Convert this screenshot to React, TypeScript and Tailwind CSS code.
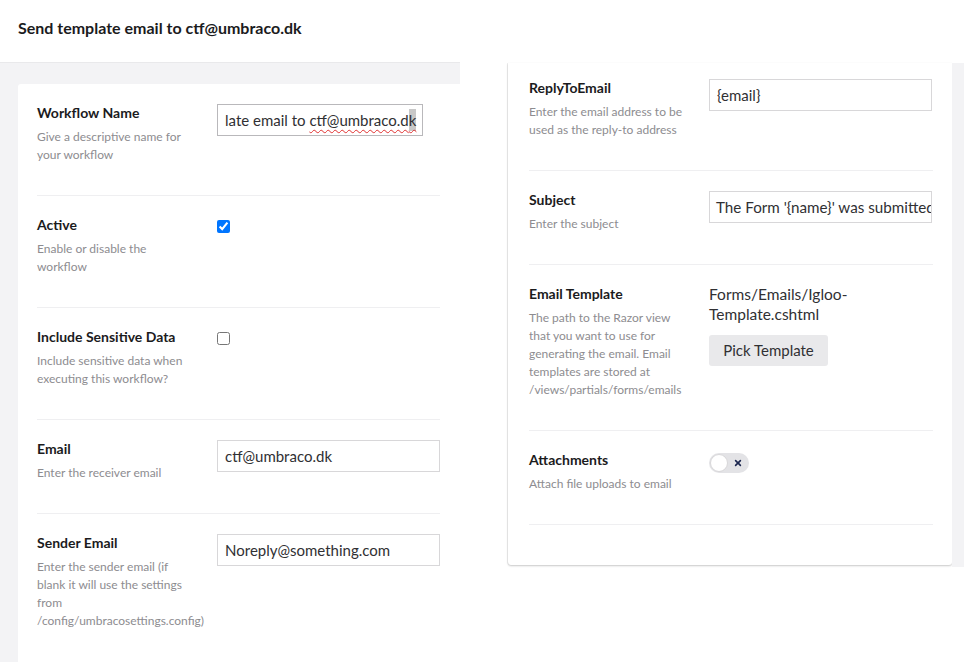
import React from 'react';

type RowProps = {
  label: string;
  description: React.ReactNode;
  children?: React.ReactNode;
  first?: boolean;
  last?: boolean;
};

function Row({ label, description, children, first, last }: RowProps) {
  return (
    <div
      className={`flex pb-[31px] ${last ? '' : 'border-b border-[#efeff1]'} ${first ? 'pt-[15px]' : 'pt-[19px]'}`}
    >
      <div className="w-[180px] shrink-0">
        <div className="text-[14px] font-bold leading-5 text-[#1b1b1d]">{label}</div>
        <div className="mt-[5px] w-[156px] text-[12px] leading-[18px] text-[#8d8c90]">
          {description}
        </div>
      </div>
      <div className="w-[223px] shrink-0">{children}</div>
    </div>
  );
}

function TextInput({ value }: { value: string }) {
  return (
    <div className="mt-px flex h-[32px] w-[223px] items-center overflow-hidden whitespace-nowrap border border-[#d8d7d9] bg-white px-[7px] text-[15px] text-[#303033]">
      {value}
    </div>
  );
}

export default function App() {
  return (
    <div className="flex h-[662px] w-[964px] overflow-hidden bg-white font-['Lato','Open_Sans',sans-serif]">
      {/* Left screenshot */}
      <div className="flex w-[460px] shrink-0 flex-col overflow-hidden">
        <div className="h-[63px] shrink-0 border-b border-[#e9e9eb] bg-white pl-[18px] pt-[18px]">
          <h1 className="text-[16px] font-bold leading-5 text-[#1b1b1d]">
            Send template email to ctf@umbraco.dk
          </h1>
        </div>
        <div className="flex-1 bg-[#f3f3f5] pl-[18px] pt-[21px]">
          <div className="h-full w-[442px] rounded-tl-[3px] bg-white pl-[19px] pr-[20px]">
            <Row label="Workflow Name" description="Give a descriptive name for your workflow">
              <div className="mt-px flex h-[32px] w-[206px] items-center overflow-hidden whitespace-nowrap border border-[#b9b8bb] bg-white pl-[7px] text-[15px] text-[#303033]">
                <span>late email to&nbsp;</span>
                <span className="underline decoration-[#e03030] decoration-wavy decoration-1 underline-offset-[3px]">
                  ctf@umbraco.d
                </span>
                <span className="bg-[#c8c8c8] underline decoration-[#e03030] decoration-wavy decoration-1 underline-offset-[3px]">
                  k
                </span>
              </div>
            </Row>
            <Row label="Active" description="Enable or disable the workflow">
              <input
                type="checkbox"
                checked
                readOnly
                className="mt-[5px] block h-[13px] w-[13px]"
              />
            </Row>
            <Row
              label="Include Sensitive Data"
              description="Include sensitive data when executing this workflow?"
            >
              <input type="checkbox" readOnly className="mt-[5px] block h-[13px] w-[13px]" />
            </Row>
            <Row label="Email" description="Enter the receiver email">
              <TextInput value="ctf@umbraco.dk" />
            </Row>
            <Row
              last
              label="Sender Email"
              description="Enter the sender email (if blank it will use the settings from /config/umbracosettings.config)"
            >
              <TextInput value="Noreply@something.com" />
            </Row>
          </div>
        </div>
      </div>

      {/* Right screenshot */}
      <div className="flex flex-1 flex-col">
        <div className="h-[63px] shrink-0" />
        <div className="flex items-start">
          <div className="w-[48px] shrink-0" />
          <div className="w-[444px] shrink-0 rounded-b-[3px] bg-white pb-[40px] pl-[21px] pr-[19px] shadow-[0_1px_2px_rgba(0,0,0,0.22),-1px_0_0_rgba(0,0,0,0.06)]">
            <Row
              first
              label="ReplyToEmail"
              description="Enter the email address to be used as the reply-to address"
            >
              <TextInput value="{email}" />
            </Row>
            <Row label="Subject" description="Enter the subject">
              <div className="mt-px flex h-[32px] w-[223px] items-center overflow-hidden whitespace-nowrap border border-[#d8d7d9] bg-white pl-[6px] text-[15.2px] text-[#303033]">
                The Form '{'{name}'}' was submitted
              </div>
            </Row>
            <Row
              label="Email Template"
              description="The path to the Razor view that you want to use for generating the email. Email templates are stored at /views/partials/forms/emails"
            >
              <div className="text-[15.5px] leading-5 text-[#303033]">
                Forms/Emails/Igloo-Template.cshtml
              </div>
              <button className="mt-[11px] h-[31px] w-[119px] rounded-[3px] bg-[#e9e9eb] text-[15px] text-[#303033]">
                Pick Template
              </button>
            </Row>
            <Row label="Attachments" description="Attach file uploads to email">
              <div className="relative mt-[3px] h-[20px] w-[40px] rounded-full bg-[#e3e3e6]">
                <div className="absolute left-px top-px h-[18px] w-[18px] rounded-full border border-[#d8d7d9] bg-white" />
                <svg
                  viewBox="0 0 10 10"
                  className="absolute left-[25px] top-[6px] h-[8px] w-[8px]"
                  fill="none"
                  stroke="#1b264f"
                  strokeWidth="2"
                  strokeLinecap="round"
                >
                  <path d="M2 2 L8 8 M8 2 L2 8" />
                </svg>
              </div>
            </Row>
          </div>
          <div className="h-[504px] flex-1 bg-[#f3f3f5]" />
        </div>
      </div>
    </div>
  );
}
